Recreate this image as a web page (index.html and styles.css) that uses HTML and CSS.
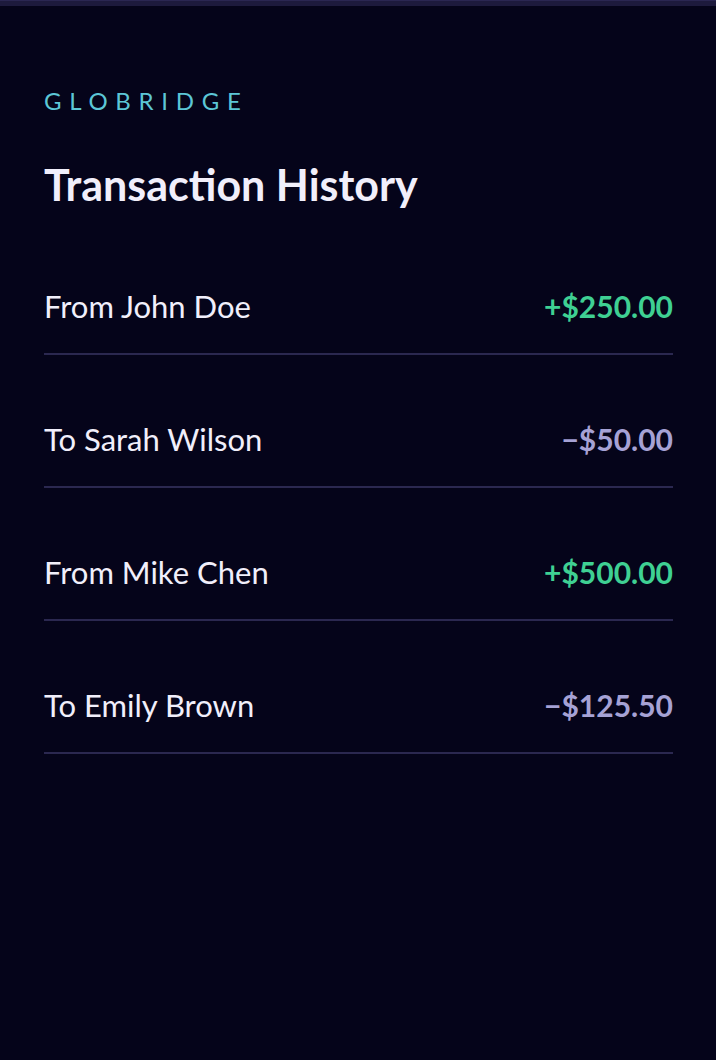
FILE: index.html
```html
<!DOCTYPE html>
<html lang="en">
<head>
    <meta charset="UTF-8">
    <meta name="viewport" content="width=device-width, initial-scale=1.0">
    <title>Globridge - Transaction History</title>
    <link rel="stylesheet" href="styles.css">
</head>
<body>
    <div class="topbar"></div>
    <div class="container">
        <div class="brand">GLOBRIDGE</div>
        <h1>Transaction History</h1>
        <ul class="tx-list">
            <li class="tx">
                <span class="tx-name">From John Doe</span>
                <span class="tx-amount credit">+$250.00</span>
            </li>
            <li class="tx">
                <span class="tx-name">To Sarah Wilson</span>
                <span class="tx-amount debit">&minus;$50.00</span>
            </li>
            <li class="tx">
                <span class="tx-name">From Mike Chen</span>
                <span class="tx-amount credit">+$500.00</span>
            </li>
            <li class="tx">
                <span class="tx-name">To Emily Brown</span>
                <span class="tx-amount debit">&minus;$125.50</span>
            </li>
        </ul>
    </div>
</body>
</html>
```

FILE: styles.css
```css
body {
    font-family: 'Lato', 'Open Sans', sans-serif;
    background: #05041a;
    margin: 0;
    min-height: 100vh;
    color: #f1effb;
}

.topbar {
    height: 5px;
    background: #1d1a3d;
    border-top: 1px solid #2a2652;
}

.container {
    padding: 81px 43px 40px 44px;
}

.brand {
    font-size: 24px;
    letter-spacing: 7.7px;
    color: #5cc6d6;
    line-height: 28px;
}

h1 {
    font-size: 43px;
    font-weight: 700;
    margin: 45px 0 0;
    line-height: 50px;
}

.tx-list {
    list-style: none;
    margin: 51px 0 0;
    padding: 0;
}

.tx {
    display: flex;
    justify-content: space-between;
    align-items: center;
    padding: 28px 0 30px;
    line-height: 34px;
    border-bottom: 2px solid #2b2850;
    margin-bottom: 39px;
}

.tx-name {
    font-size: 31px;
}

.tx-amount {
    font-size: 30px;
    font-weight: 700;
}

.credit {
    color: #3fd093;
}

.debit {
    color: #a6a2d5;
}
```
